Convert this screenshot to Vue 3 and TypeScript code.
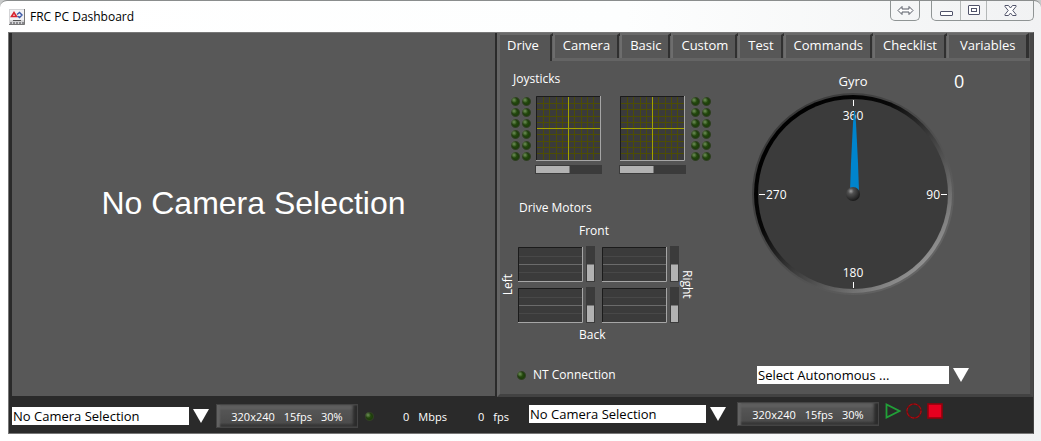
<script setup lang="ts">
import { ref } from 'vue'

interface Motor {
  id: string
  label: string
}

const tabs: string[] = ['Drive', 'Camera', 'Basic', 'Custom', 'Test', 'Commands', 'Checklist', 'Variables']
const activeTab = ref<string>('Drive')

const sticks: string[] = ['left', 'right']
const gridLines: number[] = [7, 13, 20, 26, 38, 45, 51, 57]

const motors: Motor[] = [
  { id: 'fl', label: 'Front left motor' },
  { id: 'fr', label: 'Front right motor' },
  { id: 'bl', label: 'Back left motor' },
  { id: 'br', label: 'Back right motor' },
]

const leftCamera = ref<string>('No Camera Selection')
const rightCamera = ref<string>('No Camera Selection')
const autonomous = ref<string>('Select Autonomous ...')
const gyro = ref<number>(0)
const videoSettings: string[] = ['320x240', '15fps', '30%']
</script>

<template>
  <div class="window">
    <header class="titlebar">
      <svg class="app-icon" width="16" height="16" viewBox="0 0 16 16" aria-hidden="true">
        <rect width="16" height="16" fill="#d4d4d6" />
        <rect x="1" y="1" width="14" height="10" fill="#f1f1f4" />
        <path d="M2.5 7.5 5 3.5 7.5 7.5Z" fill="none" stroke="#d8232f" stroke-width="1.6" />
        <path d="M8 5.5 10.5 3.5 13 6 10.5 8.5 8.5 7" fill="none" stroke="#3a58a8" stroke-width="1.4" />
        <path d="M4 11.5H12" stroke="#555" />
        <path d="M1 14H15" stroke="#8a8a8e" stroke-width="2" stroke-dasharray="2 1" />
        <path d="M15.5 0V15.5H0" fill="none" stroke="#777" />
      </svg>
      <h1 class="title">FRC PC Dashboard</h1>
      <div class="controls">
        <button type="button" class="ctl ctl-swap" aria-label="Move to other display">
          <svg width="17" height="11" viewBox="0 0 17 11">
            <path d="M1 5.5 5 1.5V4H12V1.5L16 5.5 12 9.5V7H5V9.5Z" fill="#fff" stroke="#565a64" />
          </svg>
        </button>
        <div class="ctl-group">
          <button type="button" class="ctl ctl-min" aria-label="Minimize">
            <svg width="13" height="13" viewBox="0 0 13 13">
              <rect x=".5" y="7.5" width="12" height="4" rx=".5" fill="#fff" stroke="#50536a" />
            </svg>
          </button>
          <button type="button" class="ctl ctl-max" aria-label="Maximize">
            <svg width="12" height="11" viewBox="0 0 12 11">
              <rect x=".5" y=".5" width="11" height="9" rx=".5" fill="#fff" stroke="#50536a" />
              <rect x="3.5" y="3.5" width="5" height="3" fill="#fff" stroke="#50536a" />
            </svg>
          </button>
          <button type="button" class="ctl ctl-close" aria-label="Close">
            <svg width="13" height="12" viewBox="0 0 13 12">
              <path d="M1 .5H4.5L6.5 3 8.5 .5H12V1.5L8.8 5.5 12 9.5V10.5H8.5L6.5 8 4.5 10.5H1V9.5L4.2 5.5 1 1.5Z" fill="#fff" stroke="#50536a" />
            </svg>
          </button>
        </div>
      </div>
    </header>

    <main class="dashboard">
      <div class="panels">
        <section class="camera" aria-label="Camera">
          <p class="camera-text">No Camera Selection</p>
        </section>

        <section class="side">
          <nav class="tabs" role="tablist">
            <button
              v-for="tab in tabs"
              :key="tab"
              type="button"
              role="tab"
              class="tab"
              :class="{ active: tab === activeTab }"
              :aria-selected="tab === activeTab"
              @click="activeTab = tab"
            >{{ tab }}</button>
            <span class="tab-rest"></span>
          </nav>

          <div class="page">
            <div class="drive">
              <h2 class="label joy-label">Joysticks</h2>
              <div class="joysticks">
                <div class="leds">
                  <span v-for="n in 12" :key="n" class="led"></span>
                </div>
                <div v-for="stick in sticks" :key="stick" class="stick">
                  <svg class="pad" width="65" height="65" viewBox="0 0 65 65" role="img" :aria-label="stick + ' joystick'">
                    <rect width="65" height="65" fill="#3b3b3b" />
                    <g stroke="#4d4d04">
                      <template v-for="p in gridLines" :key="p">
                        <path :d="`M${p + 0.5} 0V65M0 ${p + 0.5}H65`" />
                      </template>
                    </g>
                    <path d="M32.5 0V65M0 32.5H65" stroke="#a3a300" />
                    <path d="M.5 65V.5H65" fill="none" stroke="#1b1b1b" />
                    <path d="M64.5 0V64.5H0" fill="none" stroke="#a6a6a6" />
                  </svg>
                  <div class="throttle"><span class="throttle-fill"></span></div>
                </div>
                <div class="leds">
                  <span v-for="n in 12" :key="n" class="led"></span>
                </div>
              </div>

              <h2 class="label motors-label">Drive Motors</h2>
              <p class="label front">Front</p>
              <div class="motors">
                <span class="label side-label left">Left</span>
                <div class="charts">
                  <div v-for="motor in motors" :key="motor.id" class="motor">
                    <svg width="65" height="35" viewBox="0 0 65 35" role="img" :aria-label="motor.label">
                      <rect width="65" height="35" fill="#3b3b3b" />
                      <path d="M1 9.5H64M1 25.5H64" stroke="#484848" />
                      <path d="M1 17.5H64" stroke="#6b6b6b" />
                      <path d="M.5 35V.5H65" fill="none" stroke="#1b1b1b" />
                      <path d="M64.5 0V34.5H0" fill="none" stroke="#a6a6a6" />
                    </svg>
                    <div class="level"><span class="level-fill"></span></div>
                  </div>
                </div>
                <span class="label side-label right">Right</span>
              </div>
              <p class="label back">Back</p>

              <p class="label connection"><span class="led"></span>NT Connection</p>
            </div>

            <div class="gyro">
              <div class="gyro-grid">
                <h2 class="gyro-label">Gyro</h2>
                <output class="gyro-value">{{ gyro }}</output>
                <svg class="dial" width="202" height="202" viewBox="0 0 202 202" role="img" aria-label="Gyro heading">
                  <defs>
                    <linearGradient id="rim" x1="0.15" y1="0.15" x2="0.87" y2="0.87">
                      <stop offset="0" stop-color="#000" />
                      <stop offset=".3" stop-color="#080808" />
                      <stop offset=".55" stop-color="#3c3c3c" />
                      <stop offset=".75" stop-color="#606060" />
                      <stop offset="1" stop-color="#959595" />
                    </linearGradient>
                    <linearGradient id="rimOuter" x1="0.15" y1="0.15" x2="0.87" y2="0.87">
                      <stop offset="0" stop-color="#3a3a3a" />
                      <stop offset=".5" stop-color="#4c4c4c" />
                      <stop offset="1" stop-color="#666" />
                    </linearGradient>
                    <radialGradient id="hub" cx=".35" cy=".3" r=".7">
                      <stop offset="0" stop-color="#a0a0a0" />
                      <stop offset=".3" stop-color="#505050" />
                      <stop offset="1" stop-color="#1c1c1c" />
                    </radialGradient>
                  </defs>
                  <circle cx="101" cy="101" r="101" fill="url(#rimOuter)" />
                  <circle cx="101" cy="101" r="99" fill="url(#rim)" />
                  <circle cx="101" cy="101" r="95" fill="#3b3b3b" />
                  <path d="M101.5 7V13M101.5 189V195M7 101.5H13M189 101.5H195" stroke="#fff" />
                  <text x="101" y="27" text-anchor="middle">360</text>
                  <text x="101" y="184" text-anchor="middle">180</text>
                  <text x="14" y="106">270</text>
                  <text x="188" y="106" text-anchor="end">90</text>
                  <path d="M102 18H103L104 30 105 50 106 70 107 98H98L99 70 100 50 101 30Z" fill="#0084cc" />
                  <circle cx="101" cy="101" r="7" fill="url(#hub)" />
                </svg>
              </div>
              <div class="combo">
                <select v-model="autonomous" class="wide" aria-label="Autonomous mode">
                  <option>Select Autonomous ...</option>
                </select>
                <svg class="arrow" width="16" height="14" viewBox="0 0 16 14" aria-hidden="true"><path d="M0 0H16L8 14Z" fill="#fff" /></svg>
              </div>
            </div>
          </div>
        </section>
      </div>

      <footer class="bar">
        <div class="bar-group">
          <div class="combo">
            <select v-model="leftCamera" aria-label="Left camera">
              <option>No Camera Selection</option>
            </select>
            <svg class="arrow" width="16" height="14" viewBox="0 0 16 14" aria-hidden="true"><path d="M0 0H16L8 14Z" fill="#fff" /></svg>
          </div>
          <button type="button" class="settings"><span v-for="s in videoSettings" :key="s">{{ s }}</span></button>
          <span class="led"></span>
          <p class="stat rate"><span>0</span><span>Mbps</span></p>
          <p class="stat fps"><span>0</span><span>fps</span></p>
        </div>
        <div class="bar-group second">
          <div class="combo">
            <select v-model="rightCamera" aria-label="Right camera">
              <option>No Camera Selection</option>
            </select>
            <svg class="arrow" width="16" height="14" viewBox="0 0 16 14" aria-hidden="true"><path d="M0 0H16L8 14Z" fill="#fff" /></svg>
          </div>
          <button type="button" class="settings"><span v-for="s in videoSettings" :key="s">{{ s }}</span></button>
          <div class="transport">
            <button type="button" aria-label="Play">
              <svg width="16" height="16" viewBox="0 0 16 16"><path d="M1.5 1.5V14.5L14.5 8Z" fill="none" stroke="#21a038" stroke-width="1.8" /></svg>
            </button>
            <button type="button" aria-label="Record">
              <svg width="16" height="16" viewBox="0 0 16 16">
                <circle cx="8" cy="8" r="7" fill="none" stroke="#84080c" stroke-width="1.6" />
                <circle cx="8" cy="8" r="7" fill="none" stroke="#a81016" stroke-dasharray="3 2.5" />
              </svg>
            </button>
            <button type="button" aria-label="Stop">
              <svg width="16" height="16" viewBox="0 0 16 16"><rect x="1" y="1" width="14" height="14" fill="#e6001f" stroke="#94000c" stroke-width="1.6" /></svg>
            </button>
          </div>
        </div>
      </footer>
    </main>
  </div>
</template>

<style>
body {
  margin: 0;
  background: #c9cbcb;
}
</style>

<style scoped>
* {
  box-sizing: border-box;
}
h1,
h2,
p {
  margin: 0;
  font-weight: 400;
}
button {
  margin: 0;
  padding: 0;
  border: 0;
  background: none;
  font: inherit;
  color: inherit;
}
svg {
  display: block;
  flex: none;
}
.window {
  display: flex;
  flex-direction: column;
  min-height: 100vh;
  padding: 0 7px 7px 8px;
  border-top: 1px solid #8a8d8d;
  border-radius: 7px 7px 0 0;
  background: linear-gradient(90deg, #fff 0%, #fdfefe 60%, #f1f2f3 100%);
  font-family: "Open Sans", "Noto Sans", sans-serif;
  font-size: 13px;
  color: #fff;
}
.titlebar {
  display: flex;
  height: 31px;
}
.app-icon {
  margin: 8px 5px 0 1px;
}
.title {
  margin-top: 7px;
  font-size: 12px;
  line-height: 18px;
  color: #000;
}
.controls {
  display: flex;
  gap: 11px;
  margin-left: auto;
  height: 20px;
}
.ctl {
  display: flex;
  align-items: center;
  justify-content: center;
  height: 19px;
}
.ctl-swap,
.ctl-group {
  border: 1px solid #8f9494;
  border-top: 0;
  border-radius: 0 0 5px 5px;
}
.ctl-swap {
  width: 30px;
  height: 20px;
}
.ctl-group {
  display: flex;
  height: 20px;
}
.ctl-min {
  width: 28px;
}
.ctl-max {
  width: 27px;
  border-left: 1px solid #b4b8b8;
  border-right: 1px solid #b4b8b8;
}
.ctl-close {
  width: 46px;
}
.dashboard {
  flex: 1;
  display: flex;
  flex-direction: column;
  border: 1px solid #777;
  border-right-color: #444;
  background: #2a2a2a;
}
.panels {
  flex: 1;
  display: grid;
  grid-template-columns: minmax(320px, 488fr) minmax(536px, 536fr);
}
.camera {
  display: flex;
  align-items: center;
  justify-content: center;
  margin: 0 2px 1px 3px;
  padding-bottom: 24px;
  background: #585858;
}
.camera-text {
  font-family: "Liberation Sans", Arial, sans-serif;
  font-size: 32px;
  line-height: 40px;
}
.side {
  display: flex;
  flex-direction: column;
  border-left: 3px solid #646464;
  border-right: 3px solid #484848;
  border-bottom: 3px solid #424242;
  background: #555;
}
.tabs {
  display: flex;
  height: 28px;
}
.tab {
  height: 25px;
  padding: 0 7px 0 8px;
  border-left: 2px solid #6d6d6d;
  border-right: 3px solid #303030;
  border-top: 2px solid #696969;
  background: #575757;
  line-height: 18px;
  padding-bottom: 4px;
  box-shadow: 0 3px 0 #646464, -1px 3px 0 #646464;
}
.tab.active {
  height: 28px;
  padding: 0 11px 7px 7px;
  border-left: 0;
  background: #555;
  box-shadow: none;
}
.tab:last-of-type {
  padding-left: 11px;
  padding-right: 10px;
}
.tab-rest {
  flex: 1;
  border-bottom: 3px solid #646464;
}
.page {
  flex: 1;
  display: flex;
  padding-bottom: 10px;
}
.drive {
  display: flex;
  flex-direction: column;
  width: 252px;
}
.label {
  font-size: 12px;
  line-height: 16px;
}
.joy-label {
  margin: 10px 0 9px 13px;
}
.joysticks {
  display: flex;
  margin-left: 10px;
}
.leds {
  display: grid;
  grid-template-columns: 11px 11px;
  align-content: start;
}
.led {
  display: block;
  flex: none;
  width: 11px;
  height: 11px;
  background:
    radial-gradient(circle 3px at 4px 4px, #6f9058, transparent),
    radial-gradient(circle 5px at center, #28500f 0, #1d3d0b 60%, #2f3f22 80%, transparent 100%);
}
.stick {
  width: 67px;
  margin-left: 3px;
}
.stick + .stick {
  margin-left: 17px;
  margin-right: 4px;
}
.pad {
  margin: 0 1px 4px;
}
.throttle {
  height: 9px;
  padding: 1px;
  background: #3b3b3b;
}
.throttle-fill {
  display: block;
  width: 52%;
  height: 7px;
  border-right: 1px solid #777;
  background: #b2b2b2;
}
.motors-label {
  margin: 26px 0 7px 19px;
}
.front {
  margin: 0 0 7px 79px;
}
.motors {
  display: flex;
  align-items: center;
}
.side-label {
  writing-mode: vertical-rl;
}
.side-label.left {
  margin-right: 2px;
  transform: rotate(180deg);
}
.charts {
  display: grid;
  grid-template-columns: auto auto;
  gap: 5px 7px;
}
.motor {
  display: flex;
  gap: 3px;
  align-items: flex-end;
}
.level {
  display: flex;
  align-items: flex-end;
  width: 9px;
  height: 36px;
  padding: 1px;
  background: #3b3b3b;
}
.level-fill {
  width: 7px;
  height: 50%;
  border-top: 1px solid #777;
  background: #b2b2b2;
}
.back {
  margin: 4px 0 0 79px;
}
.connection {
  display: flex;
  align-items: center;
  gap: 6px;
  margin: auto 0 0 16px;
  line-height: 18px;
}
.gyro {
  display: flex;
  flex-direction: column;
}
.gyro-grid {
  display: grid;
  grid-template-columns: 202px auto;
  row-gap: 1px;
  padding-top: 9px;
}
.gyro-label {
  font-size: 13px;
  line-height: 22px;
  text-align: center;
}
.gyro-value {
  font-size: 18px;
  line-height: 22px;
}
.dial text {
  font-size: 12px;
  fill: #fff;
}
.combo {
  display: flex;
  align-items: center;
  gap: 4px;
}
.gyro .combo {
  margin: auto 0 0 5px;
}
select {
  appearance: none;
  width: 177px;
  height: 18px;
  margin: 0;
  padding: 0 1px;
  border: 0;
  border-radius: 0;
  background: #fff;
  color: #000;
  font: 13px/18px "Open Sans", "Noto Sans", sans-serif;
}
select.wide {
  width: 192px;
}
.bar {
  display: flex;
  justify-content: space-between;
  flex-wrap: wrap;
  height: 36px;
  padding: 5px 90px 0 3px;
}
.bar-group {
  display: flex;
  align-items: center;
  height: 28px;
}
.second {
  height: 24px;
}
.settings {
  display: flex;
  align-items: center;
  justify-content: center;
  gap: 9px;
  width: 142px;
  height: 24px;
  margin-left: 7px;
  border: 1px solid #444;
  background: linear-gradient(#6b6b6b, #555 25%, #4c4c4c 80%, #2c2c2c);
  box-shadow: inset 3px 0 2px #626262, inset -4px 0 3px #2b2b2b;
  font-size: 11px;
}
.second .settings {
  margin-left: 11px;
}
.bar-group > .led {
  margin-left: 6px;
}
.stat {
  display: flex;
  gap: 9px;
  font-size: 11px;
}
.rate {
  margin-left: 28px;
}
.fps {
  margin-left: 31px;
}
.transport {
  display: flex;
  gap: 5px;
  margin-left: 6px;
  padding-bottom: 6px;
}
</style>
